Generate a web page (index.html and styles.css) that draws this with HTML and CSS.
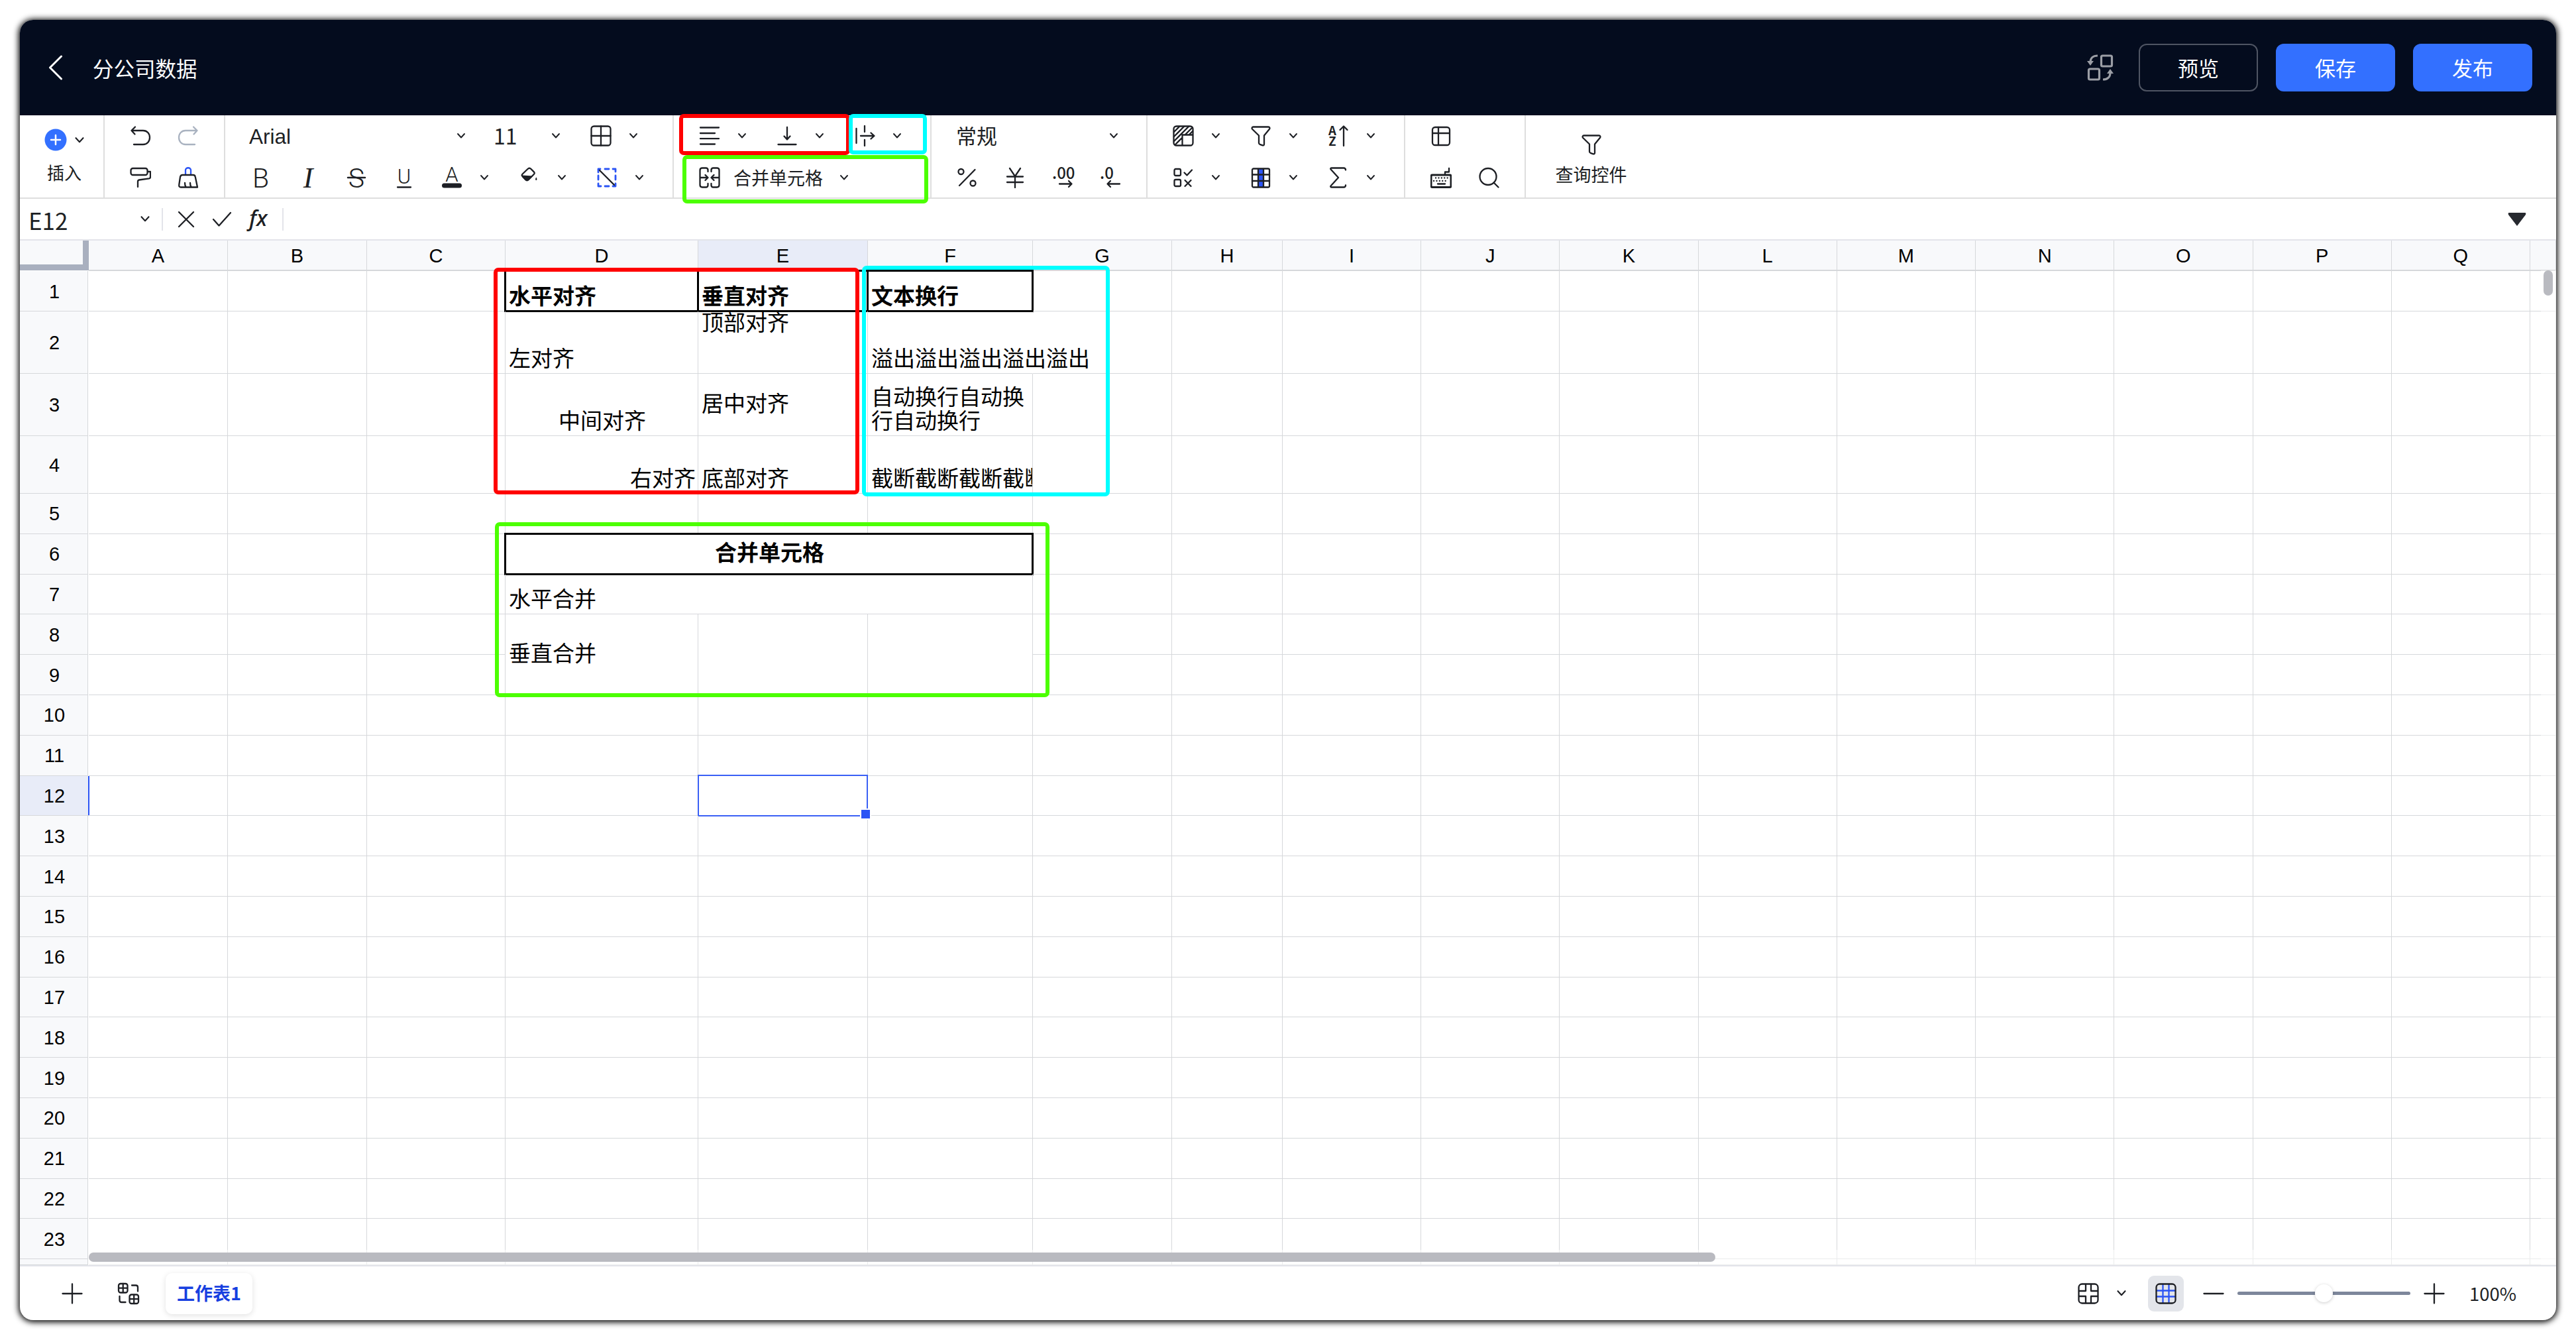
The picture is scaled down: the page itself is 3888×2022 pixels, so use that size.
FILE: index.html
```html
<!DOCTYPE html>
<html lang="zh-CN">
<head>
  <meta charset="UTF-8">
  <title>分公司数据</title>
  <link rel="stylesheet" href="styles.css">
</head>
<body>

<!-- Shared icons -->
<svg class="sprite">
  <symbol id="chev" viewBox="0 0 14 10"><path d="M2 2l5 5.5L12 2"/></symbol>
  <symbol id="filter" viewBox="0 0 32 32"><path d="M4.500 2.500h23c1.800 0 2.500 2 1.500 3.200L21 15.500v13c0 1.500-1 2.200-2.300 1.800l-4.200-1.500c-1-.4-1.500-1-1.500-2V15.500L3 5.700C2 4.500 2.700 2.500 4.500 2.500z"/></symbol>
</svg>

<div class="window">

  <header class="topbar">
    <svg class="back" viewBox="0 0 22 38"><path d="M19.500 2L2.500 19l17 17"/></svg>
    <span class="title">分公司数据</span>
    <svg class="swap" viewBox="0 0 42 42">
      <rect x="22.500" y="3" width="16" height="16" rx="2"/><rect x="3.500" y="23" width="16" height="16" rx="2"/>
      <path d="M17 3c-7 0-11 4-11 10M25 39c7 0 11-4 11-10"/>
      <path class="solid" d="M1 11h10l-5 7zM31 30h10l-5-7z"/>
    </svg>
    <button class="btn ghost">预览</button>
    <button class="btn">保存</button>
    <button class="btn">发布</button>
  </header>

  <div class="toolbar">
    <div class="group g-insert">
      <div class="insert-row">
        <svg class="plus-dot" viewBox="0 0 34 34"><circle cx="17" cy="17" r="16.500"/><path d="M17 10v14M10 17h14"/></svg>
        <svg class="chev big"><use href="#chev"/></svg>
      </div>
      <span class="label">插入</span>
    </div>

    <div class="group g-history">
      <div class="row">
        <div class="tool"><svg class="icon" viewBox="0 0 32 32"><path d="M8 2.500L2.500 8l5 5.500M2.500 8H20c6 0 10 4.500 10 10.500S26 29 20 29H6"/></svg></div>
        <div class="tool"><svg class="icon off" viewBox="0 0 32 32"><path d="M24 2.500L29.500 8l-5 5.500M29.500 8H12C6 8 2 12.500 2 18.500S6 29 12 29h14"/></svg></div>
      </div>
      <div class="row">
        <div class="tool"><svg class="icon" viewBox="0 0 32 32"><rect x="1.500" y="2" width="25" height="10" rx="3"/><path d="M27 7h4v8c0 1.500-.8 2-2 2.300L14 19.500c-1.500.3-2 1-2 2.500v8"/></svg></div>
        <div class="tool"><svg class="icon" viewBox="0 0 32 32"><path class="blue" d="M12 11V5c0-5 8-5 8 0v6"/><path d="M7.500 12h16c2 0 3 1 3.300 3L30 30.500H5c-2 0-3.200-1-2.700-4L4 15c.4-2 1.500-3 3.500-3zM12.500 30c-1.500-2-1.500-4-1.500-6M20.500 30c-1.500-2-1.500-4-1.500-6"/></svg></div>
      </div>
    </div>

    <div class="group g-font">
      <div class="row">
        <div class="select family"><span>Arial</span><svg class="chev"><use href="#chev"/></svg></div>
        <div class="select size"><span>11</span><svg class="chev"><use href="#chev"/></svg></div>
        <div class="tool drop"><svg class="icon" viewBox="0 0 32 32"><rect x="1.500" y="1.500" width="29" height="29" rx="4"/><path d="M16 1.500v29M1.500 16h29"/></svg><svg class="chev"><use href="#chev"/></svg></div>
      </div>
      <div class="row">
        <div class="tool"><svg class="icon glyph" viewBox="0 0 32 32"><text class="large" x="15.500" y="30.500">B</text></svg></div>
        <div class="tool"><svg class="icon glyph slant" viewBox="0 0 32 32"><text x="15" y="30.500">I</text></svg></div>
        <div class="tool"><svg class="icon glyph" viewBox="0 0 32 32"><text class="large" x="16" y="30.500">S</text><path d="M3 16h26" stroke-width="2.500"/></svg></div>
        <div class="tool"><svg class="icon glyph" viewBox="0 0 32 32"><text class="small" x="16" y="24.500">U</text><path d="M6 30.500h20"/></svg></div>
        <div class="tool drop"><svg class="icon glyph" viewBox="0 0 32 32"><text class="small" x="16" y="21.500">A</text><rect class="solid" x="1" y="24.500" width="30" height="7" rx="3.500"/></svg><svg class="chev"><use href="#chev"/></svg></div>
        <div class="tool drop"><svg class="icon" viewBox="0 0 32 32"><path d="M13.500 3L5.700 10.500c-1.300 1.300-1.300 2.500 0 3.800l4.600 4.900c1.300 1.300 3 1.300 4.300 0l8.200-8.200c1.200-1.200 1.200-2.400 0-3.600L18.500 3c-1.600-1.600-3.400-1.600-5 0z"/><path class="solid" d="M5 12.500l16.500 1-6.500 6.500c-1.300 1.300-3.700 1.300-5 0l-5-5zM26.300 15.500c-4 6 4 6 0 0z"/></svg><svg class="chev"><use href="#chev"/></svg></div>
        <div class="tool drop"><svg class="icon" viewBox="0 0 32 32"><path class="blue" stroke-width="2.800" d="M3 8V3h3M13 3h6M25 3h4v4M29 13v6M29 25v4h-4M19 29h-6M7 29H3v-4M3 19v-6"/><path d="M5 5l22 22"/></svg><svg class="chev"><use href="#chev"/></svg></div>
      </div>
    </div>

    <div class="group g-align">
      <div class="row">
        <div class="tool drop"><svg class="icon" viewBox="0 0 32 32"><path d="M2 3.500h28M2 12h22M2 20.200h28M2 28.500h22"/></svg><svg class="chev"><use href="#chev"/></svg></div>
        <div class="tool drop"><svg class="icon" viewBox="0 0 32 32"><path d="M16 3v18M11.500 16.500L16 21.500l4.500-5M2.500 29h27"/></svg><svg class="chev"><use href="#chev"/></svg></div>
        <div class="tool drop"><svg class="icon" viewBox="0 0 32 32"><path d="M3.500 5v22M16 1v9M16 22v9M10 16h20M25.500 11.500L30.500 16l-5 4.500"/></svg><svg class="chev"><use href="#chev"/></svg></div>
      </div>
      <div class="row">
        <div class="tool"><svg class="icon" viewBox="0 0 32 32"><path d="M13.500 7V4.500c0-2-1-3-3-3H5c-2 0-3.500 1.500-3.500 3.500v22c0 2 1.500 3.500 3.500 3.500h5.500c2 0 3-1 3-3V25M18.500 7V4.500c0-2 1-3 3-3H27c2 0 3.500 1.500 3.500 3.500v22c0 2-1.500 3.500-3.500 3.500h-5.500c-2 0-3-1-3-3V25M2 16h11M9.500 12l4 4-4 4M30 16H19M22.500 12l-4 4 4 4"/></svg></div>
        <span class="label merge-label">合并单元格</span>
        <svg class="chev"><use href="#chev"/></svg>
      </div>
    </div>

    <div class="group g-number">
      <div class="row">
        <div class="select format"><span>常规</span><svg class="chev"><use href="#chev"/></svg></div>
      </div>
      <div class="row">
        <div class="tool"><svg class="icon" viewBox="0 0 32 32"><circle cx="6.500" cy="7" r="4"/><circle cx="24.500" cy="24.500" r="4"/><path d="M27.500 4L4 28"/></svg></div>
        <div class="tool"><svg class="icon" viewBox="0 0 32 32"><path d="M8 2l8 12 8-12M4 14.500h24M4 23h24M16 14v17"/></svg></div>
        <div class="tool"><svg class="icon glyph" viewBox="0 0 32 32"><text class="digits" x="0" y="18">.00</text><path d="M11 25.500h18M25 21l4.500 4.500L25 30"/></svg></div>
        <div class="tool"><svg class="icon glyph" viewBox="0 0 32 32"><text class="digits" x="0" y="18">.0</text><path d="M30 25.500H12M16 21l-4.500 4.500L16 30"/></svg></div>
      </div>
    </div>

    <div class="group g-data">
      <div class="row">
        <div class="tool drop"><svg class="icon" viewBox="0 0 32 32"><rect x="1.500" y="1.500" width="29" height="29" rx="4"/><path d="M14.500 30V14.500H30M2 10L10 2M2 17L17 2M2 24L24 2M4 29l10-10M19 14L29 4M25 14l5-5"/></svg><svg class="chev"><use href="#chev"/></svg></div>
        <div class="tool drop"><svg class="icon"><use href="#filter"/></svg><svg class="chev"><use href="#chev"/></svg></div>
        <div class="tool drop"><svg class="icon glyph" viewBox="0 0 32 32"><text class="az" x="7" y="15">A</text><text class="az" x="7" y="31">Z</text><path d="M24 31V2M18.500 7L24 1.500 29.500 7"/></svg><svg class="chev"><use href="#chev"/></svg></div>
      </div>
      <div class="row">
        <div class="tool drop"><svg class="icon" viewBox="0 0 32 32"><rect x="2.500" y="3" width="9.500" height="10" rx="2"/><rect x="2.500" y="19" width="9.500" height="10" rx="2"/><path d="M17.500 8.500l4 4L29 4.500M18.500 20l9 9M27.500 20l-9 9"/></svg><svg class="chev"><use href="#chev"/></svg></div>
        <div class="tool drop"><svg class="icon" viewBox="0 0 32 32"><path class="blue-fill" d="M12 3h8v27h-8z"/><rect x="3" y="2.500" width="26" height="28" rx="2"/><path d="M12 3v27M20 3v27M3 11.500h26M3 21h26"/></svg><svg class="chev"><use href="#chev"/></svg></div>
        <div class="tool drop"><svg class="icon" viewBox="0 0 32 32"><path d="M27 4.500c0-2-1-3-3-3H6c-1.500 0-2.500 1-1 2.500L16 16 5 28c-1.500 1.500-.5 2.500 1 2.500h18c2 0 3-1 3-3"/></svg><svg class="chev"><use href="#chev"/></svg></div>
      </div>
    </div>

    <div class="group g-view">
      <div class="row">
        <div class="tool"><svg class="icon" viewBox="0 0 32 32"><rect x="3" y="3" width="26" height="27" rx="4"/><path d="M12 3v27M3 12h26"/></svg></div>
      </div>
      <div class="row">
        <div class="tool"><svg class="icon" viewBox="0 0 32 32"><rect x="1" y="12" width="30" height="18.500" rx="2" stroke-width="3"/><path d="M22 11V7.500h6V2M11 25.500h11"/><path stroke-dasharray=".1 4.300" d="M8 16.500h19M5 21h18"/></svg></div>
        <div class="tool"><svg class="icon" viewBox="0 0 32 32"><circle cx="15" cy="14.500" r="12.500"/><path d="M23.500 23.500l7 7"/></svg></div>
      </div>
    </div>

    <div class="query">
      <svg class="icon"><use href="#filter"/></svg>
      <span class="label">查询控件</span>
    </div>
  </div>

  <div class="formula">
    <span class="cell-name">E12</span>
    <svg class="chev big"><use href="#chev"/></svg>
    <i class="sep"></i>
    <svg class="f-icon cancel" viewBox="0 0 26 26"><path d="M2 2l22 22M24 2L2 24"/></svg>
    <svg class="f-icon ok" viewBox="0 0 30 26"><path d="M2 13l8.500 9.500L28 3"/></svg>
    <span class="fx">fx</span>
    <i class="sep"></i>
    <svg class="expand" viewBox="0 0 28 20"><path d="M2 0h24q2 0 1 3L14 20 1 3Q0 0 2 0z"/></svg>
  </div>

  <div class="sheet" id="sheet">
    <div class="v-track"><div class="v-thumb"></div></div>
    <div class="h-track"><div class="h-thumb"></div></div>
  </div>

  <footer class="footer">
    <svg class="icon" viewBox="0 0 32 32"><path d="M16 1.500v29M1.500 16h29"/></svg>
    <svg class="icon sheets" viewBox="0 0 34 34"><rect x="2" y="2" width="13.500" height="13.500" rx="3"/><rect x="18.500" y="18.500" width="13.500" height="13.500" rx="3"/><path d="M8.700 2v13M2 8.700h13M25.200 19v13M19 25.200h13M22 4.500h6c2 0 3 1 3 3v6M3.500 21v6c0 2 1 3 3 3h6"/></svg>
    <div class="tab">工作表1</div>
    <div class="zoom">
      <svg class="icon" viewBox="0 0 32 32"><rect x="1.500" y="1.500" width="29" height="29" rx="5"/><path d="M12 2v10H2M20 2v10h10M12 30V20H2M20 30V20h10"/></svg>
      <svg class="chev big"><use href="#chev"/></svg>
      <div class="grid-toggle"><svg class="icon" viewBox="0 0 32 32"><path class="blue" d="M11.500 2v28M20.500 2v28M2 11.500h28M2 20.500h28"/><rect x="1.500" y="1.500" width="29" height="29" rx="5"/></svg></div>
      <svg class="icon minus" viewBox="0 0 32 32"><path d="M1.500 16h29"/></svg>
      <div class="slider"><div class="thumb"></div></div>
      <svg class="icon" viewBox="0 0 32 32"><path d="M16 1.500v29M1.500 16h29"/></svg>
      <span class="percent">100%</span>
    </div>
  </footer>
</div>

<!-- Highlight frames -->
<div class="mark red mark-align"></div>
<div class="mark cyan mark-wrap"></div>
<div class="mark green mark-merge"></div>
<div class="mark red mark-align-cells"></div>
<div class="mark cyan mark-wrap-cells"></div>
<div class="mark green mark-merge-cells"></div>

<script>
  const cols = 'ABCDEFGHIJKLMNOPQ'.split('');
  const rowCount = 23;

  // cells with content: text, classes, column and row span
  const data = {
    D1: { text: '水平对齐', cls: 'bold boxed' },
    E1: { text: '垂直对齐', cls: 'bold boxed' },
    F1: { text: '文本换行', cls: 'bold boxed' },
    D2: { text: '左对齐' },
    E2: { text: '顶部对齐', cls: 'top' },
    F2: { text: '溢出溢出溢出溢出溢出', cls: 'spill' },
    D3: { text: '中间对齐', cls: 'center' },
    E3: { text: '居中对齐', cls: 'middle' },
    F3: { text: '自动换行自动换行自动换行', cls: 'wrap' },
    D4: { text: '右对齐', cls: 'right' },
    E4: { text: '底部对齐' },
    F4: { text: '截断截断截断截断', cls: 'clip' },
    D6: { text: '合并单元格', cls: 'bold boxed center middle', cs: 3 },
    D7: { text: '水平合并', cs: 3 },
    D8: { text: '垂直合并', cls: 'middle', rs: 2 },
    E8: { rs: 2 },
    F8: { rs: 2 },
    E12: { cls: 'selected' }
  };

  const sheet = document.getElementById('sheet');
  const covered = new Set();

  function add(cls, text, r, c, rs, cs) {
    const el = document.createElement('div');
    el.className = cls;
    el.style.gridArea = r + ' / ' + c + ' / span ' + (rs || 1) + ' / span ' + (cs || 1);
    if (text) {
      const span = document.createElement('span');
      span.textContent = text;
      el.appendChild(span);
    }
    sheet.appendChild(el);
  }

  add('corner', '', 1, 1);
  cols.concat('').forEach((name, i) => add('col-head' + (name === 'E' ? ' active' : ''), name, 1, i + 2));

  for (let r = 1; r <= rowCount + 1; r++) {
    add('row-head' + (r === 12 ? ' active' : ''), r <= rowCount ? String(r) : '', r + 1, 1);
    cols.concat('').forEach((name, i) => {
      const key = name + r;
      if (covered.has(key)) return;
      const cell = data[key] || {};
      for (let y = 0; y < (cell.rs || 1); y++) {
        for (let x = 0; x < (cell.cs || 1); x++) covered.add(cols[i + x] + (r + y));
      }
      add('cell ' + (cell.cls || ''), cell.text, r + 1, i + 2, cell.rs, cell.cs);
    });
  }
</script>

</body>
</html>
```
FILE: styles.css
```css
* { box-sizing: border-box; }
body {
  margin: 0;
  padding: 30px;
  height: 2022px;
  overflow: hidden;
  background: #fff;
  color: #1d1f24;
  font-family: "Noto Sans CJK SC", sans-serif;
}
svg { fill: none; stroke: #1d1f24; stroke-width: 2.3; stroke-linecap: round; stroke-linejoin: round; flex: none; display: block; }
.sprite { position: absolute; width: 0; height: 0; }
.icon { width: 32px; height: 32px; }
.icon.off { stroke: #a9b2c0; }
.blue { stroke: #2b54f5; }
.blue-fill { fill: #2b54f5; stroke: none; }
.solid { fill: #1d1f24; stroke: none; }
.chev { width: 14px; height: 10px; stroke-width: 1.9; }
.chev.big { width: 16px; height: 11px; }
.label { font-size: 27px; line-height: 36px; white-space: nowrap; }

.window {
  width: 3828px;
  height: 1962px;
  border-radius: 20px;
  overflow: hidden;
  background: #fff;
  box-shadow: 0 1px 10px 2px #000;
}

/* top bar */
.topbar { display: flex; align-items: center; height: 144px; padding: 0 36px 0 43px; background: #040c1e; color: #fff; }
.back { width: 22px; height: 38px; stroke: #fff; stroke-width: 3; }
.title { margin-left: 45px; font-size: 31.5px; line-height: 46px; }
.swap { width: 42px; height: 42px; margin-left: auto; margin-right: 37px; stroke: #9b9ea5; stroke-width: 3.2; stroke-linecap: butt; }
.swap .solid { fill: #9b9ea5; }
.btn { width: 180px; height: 72px; padding: 0 0 2px; border: 0; border-radius: 12px; background: #3370ff; color: #fff; font: 31px "Noto Sans CJK SC", sans-serif; }
.btn + .btn { margin-left: 27px; }
.btn.ghost { background: none; border: 2px solid #4f5563; }

/* toolbar */
.toolbar { display: flex; height: 126px; border-bottom: 2px solid #dedede; }
.group { height: 124px; border-right: 2px solid #dedede; }
.row { display: flex; align-items: center; height: 62px; }
.row + .row { height: 64px; }
.tool { display: flex; align-items: center; width: 72px; padding-left: 20px; }
.tool.drop { width: 117px; gap: 26px; }
.select { display: flex; align-items: center; justify-content: space-between; font-size: 32px; line-height: 44px; }

.g-insert { width: 128px; padding-top: 20px; text-align: center; }
.g-insert .label { display: block; font-size: 26px; margin: 14px 0 0 8px; }
.insert-row { display: flex; align-items: center; gap: 11px; padding-left: 37px; }
.plus-dot { width: 34px; height: 34px; stroke: #fff; stroke-width: 2.500; }
.plus-dot circle { fill: #3370ff; stroke: none; }

.g-history { width: 182px; padding-left: 18px; }
.g-font { width: 677px; padding-left: 18px; }
.family { width: 345px; padding-left: 18px; font-family: "Liberation Sans", sans-serif; font-size: 31.5px; }
.family span { padding-top: 2px; }
.size { width: 101px; margin-left: 42px; margin-right: 25px; }
.size span, .format span { margin-top: -2px; }
.glyph text { fill: #1d1f24; stroke: none; font: 300 38px Roboto, sans-serif; text-anchor: middle; }
.glyph text.large { font-size: 41px; }
.glyph.slant text { font: italic 400 44px "Liberation Serif", serif; }
.glyph text.small { font-size: 31px; }
.glyph text.digits { font: 500 24px "Noto Sans CJK SC"; text-anchor: start; }
.glyph text.az { font: 700 18.500px "Noto Sans CJK SC"; }
.glyph { overflow: visible; }

.g-align { width: 389px; padding-left: 18px; }
.merge-label { margin: 0 25px 0 0; }
.g-number { width: 326px; padding-left: 18px; }
.format { width: 264px; padding-left: 19px; font-size: 31px; }
.g-data { width: 389px; padding-left: 18px; }
.g-view { width: 182px; padding-left: 18px; }
.query { display: flex; flex-direction: column; align-items: center; width: 197px; padding-top: 28px; }
.query .label { margin-top: 11px; }

/* formula bar */
.formula { display: flex; align-items: center; height: 63px; padding: 0 45px 0 13px; border-bottom: 2px solid #e3e4ea; }
.cell-name { width: 168px; font-size: 35px; line-height: 50px; padding-top: 2px; }
.formula .sep { width: 2px; height: 34px; background: #e3e4ea; }
.chev.big + .sep { margin-left: 17px; }
.f-icon { height: 26px; }
.cancel { width: 26px; margin-left: 22px; }
.ok { width: 30px; margin-left: 26px; }
.fx { width: 50px; margin-left: 26px; padding-bottom: 4px; font: italic 500 33px/36px "Noto Sans", sans-serif; }
.expand { width: 28px; height: 20px; margin-left: auto; fill: #26292f; stroke: none; }

/* sheet */
.sheet {
  position: relative;
  display: grid;
  grid-template-columns: 104px 210px 210px 209px 291px 256px 249px 210px 167px 209px repeat(8, 209.250px) 39px;
  grid-template-rows: 46px 61px 94px 94px 87px repeat(19, 60.800px) 9px;
  height: 1546px;
  overflow: hidden;
  color: #000;
}
.corner { background: #f8f9fb; border: solid #a9b0bf; border-width: 0 9px 9px 0; margin-bottom: 1px; }
.col-head, .row-head { display: flex; align-items: center; justify-content: center; background: #f8f9fb; font: 29px "Liberation Sans", sans-serif; }
.col-head { padding-top: 2px; border-right: 1px solid #d6d8db; border-bottom: 2px solid #d6d8db; }
.col-head.active { background: #e8ecf8; border-bottom-color: #2b54f5; }
.row-head { padding: 2px 0 0 2px; border-bottom: 1px solid #d6d8db; border-right: 1px solid #d6d8db; margin-right: 1px; }
.row-head.active { background: #e8ecf8; border-right: 2px solid #2b54f5; margin-right: -1px; padding-left: 1px; }
.cell {
  position: relative;
  display: flex;
  align-items: flex-end;
  min-width: 0;
  min-height: 0;
  padding: 0 3px 6px 5px;
  border-right: 1px solid #d6d8db;
  border-bottom: 1px solid #d6d8db;
  font-size: 33px;
  line-height: 36px;
  white-space: nowrap;
}
.bold { font-weight: 700; }
.center { justify-content: center; }
.right { justify-content: flex-end; }
.top { align-items: flex-start; }
.top span { margin-top: -3px; }
.middle { align-items: center; padding-bottom: 7px; }
.wrap { white-space: normal; }
.clip { overflow: hidden; padding-right: 0; }
.spill { border-right-color: transparent; }
.boxed::after { content: ""; position: absolute; inset: -2px -2px -2px -2px; border: 3px solid #000; }
.selected::after { content: ""; position: absolute; inset: -2px -1px -2px -1px; border: 2px solid #3a60f5; }
.selected::before { content: ""; position: absolute; right: -6px; bottom: -7px; width: 13px; height: 13px; border: 2px solid #fff; background: #2b54f5; z-index: 2; }

.v-track, .h-track { position: absolute; z-index: 3; background: rgba(255, 255, 255, .5); }
.v-track { right: 0; top: 45px; width: 23px; bottom: 0; }
.v-thumb { width: 14px; height: 38px; margin-left: 4px; border-radius: 7px; background: #b9bac0; }
.h-track { left: 104px; right: 0; bottom: 0; height: 23px; }
.h-thumb { width: 2455px; height: 14px; margin-top: 4px; border-radius: 7px; background: #b9bac0; }

/* footer */
.footer { display: flex; align-items: center; height: 83px; padding: 0 60px 0 63px; border-top: 2px solid #e3e4ea; }
.sheets { width: 34px; height: 34px; margin-left: 52px; }
.tab { width: 131px; height: 62px; margin-left: 39px; border-radius: 10px; box-shadow: 0 2px 8px rgba(0, 0, 0, .12); color: #173fe0; font-weight: 700; font-size: 27px; line-height: 60px; text-align: center; }
.zoom { display: flex; align-items: center; margin-left: auto; }
.zoom .chev { margin: 0 32px 0 26px; }
.grid-toggle { display: flex; align-items: center; justify-content: center; width: 54px; height: 54px; border-radius: 9px; background: #e3e5ea; }
.minus { margin: 0 20px 0 29px; }
.slider { width: 261px; height: 5px; margin-right: 20px; border-radius: 3px; background: #7d879b; }
.thumb { width: 27px; height: 27px; margin: -11px auto 0; border-radius: 50%; background: #fff; box-shadow: 0 1px 5px rgba(0, 0, 0, .2); }
.percent { margin-left: 37px; font-size: 27.500px; line-height: 36px; padding-bottom: 2px; }

/* highlight frames */
.mark { position: absolute; border: 6px solid; border-radius: 7px; z-index: 5; }
.red { border-color: #f00; }
.cyan { border-color: #0ff; }
.green { border-color: #4cff00; }
.mark-align { left: 1025px; top: 172px; width: 258px; height: 62px; }
.mark-wrap { left: 1281px; top: 172px; width: 118px; height: 61px; }
.mark-merge { left: 1030px; top: 234px; width: 371px; height: 73px; }
.mark-align-cells { left: 745px; top: 404px; width: 552px; height: 342px; }
.mark-wrap-cells { left: 1301px; top: 401px; width: 374px; height: 348px; }
.mark-merge-cells { left: 747px; top: 788px; width: 837px; height: 264px; }
```
